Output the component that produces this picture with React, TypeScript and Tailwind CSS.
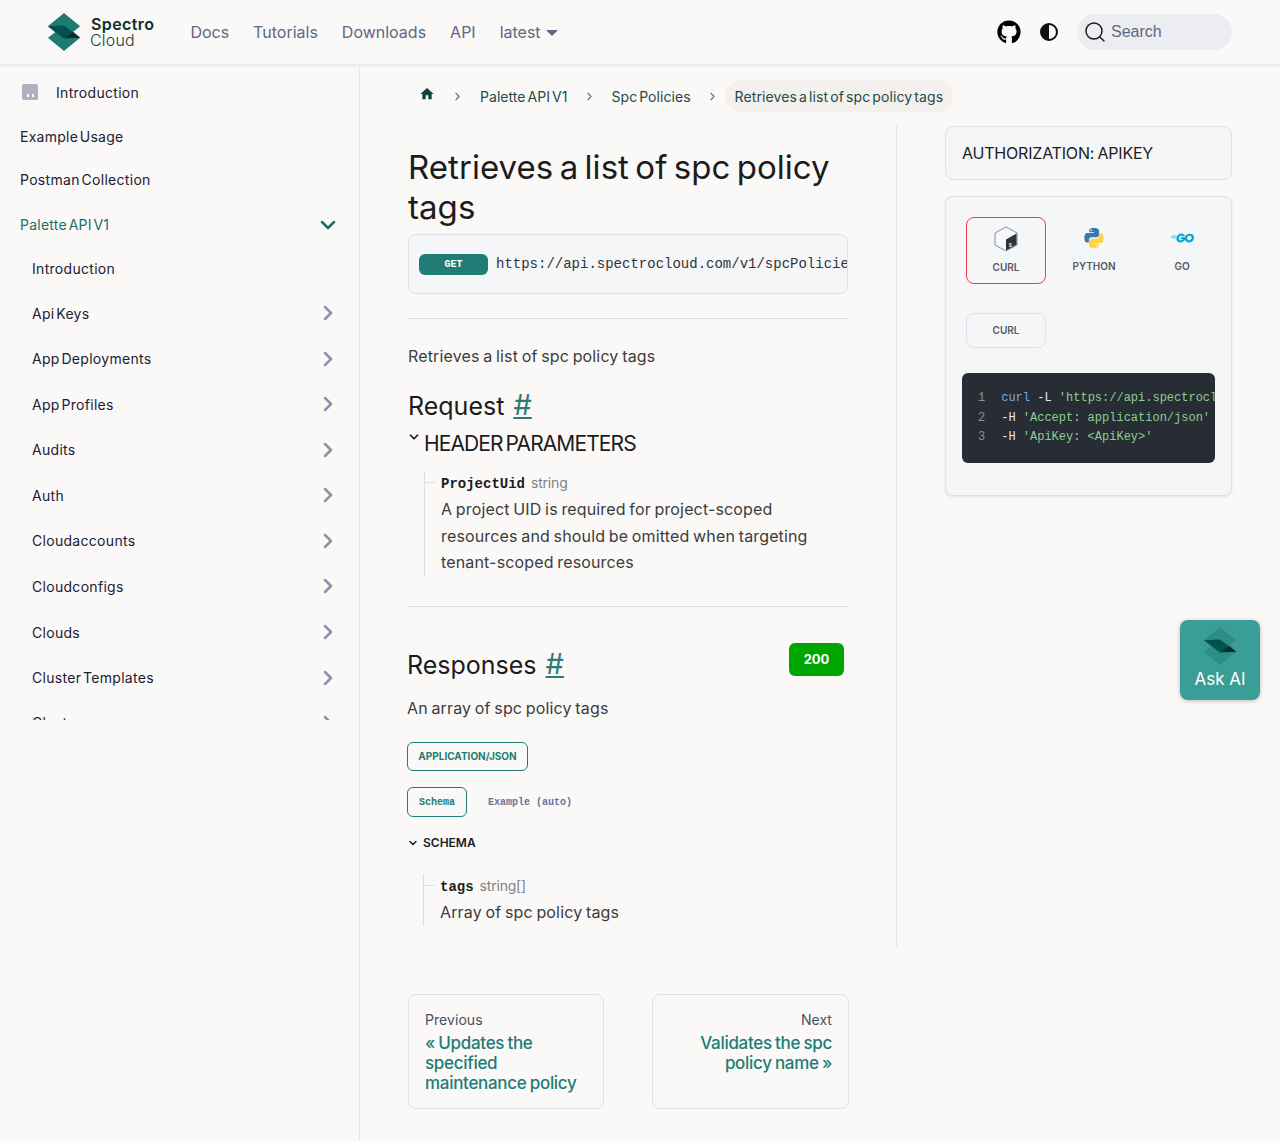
import React from 'react';
import { ChevronDown, ChevronRight, Search } from 'lucide-react';
import { FaGithub } from 'react-icons/fa';
import { MdHome } from 'react-icons/md';
import { SiGo } from 'react-icons/si';

const groups = [
  { label: 'Api Keys', h: 'h-[46px]' },
  { label: 'App Deployments', h: 'h-[45px]' },
  { label: 'App Profiles', h: 'h-[46px]' },
  { label: 'Audits', h: 'h-[45px]' },
  { label: 'Auth', h: 'h-[46px]' },
  { label: 'Cloudaccounts', h: 'h-[45px]' },
  { label: 'Cloudconfigs', h: 'h-[46px]' },
  { label: 'Clouds', h: 'h-[46px]' },
  { label: 'Cluster Templates', h: 'h-[45px]' },
  { label: 'Clusters', h: 'h-[45px]' },
];

const Logo: React.FC<{ className?: string; light?: boolean }> = ({ className, light }) => (
  <svg viewBox="0 0 36 42" className={className}>
    <path d="M18 14 L35 27 L18 41 L1 27 Z" fill={light ? '#2c8d85' : '#1f7a72'} />
    <path d="M18 1 L35 15 L18 29 L1 15 Z" fill={light ? '#2c8d85' : '#1f7a72'} />
    <path d="M1 15 L18 14 L35 27 L18 28 Z" fill="#00524c" />
    <path d="M20 27 L28 21 L35 27 Z" fill="#0b2b2a" />
  </svg>
);

const BashIcon = () => (
  <svg viewBox="0 0 24 26" className="h-[26px] w-[24px]">
    <path d="M12 1 L23 7 V19 L12 25 L1 19 V7 Z" fill="#f7f8fa" stroke="#6b7280" strokeWidth="0.8" />
    <path d="M22.500 7.500 V18.800 L12 24.600 V13.500 Z" fill="#2b333b" />
    <text x="14.500" y="21" fontSize="6" fill="#fff" fontFamily="Liberation Mono, monospace">$</text>
  </svg>
);

const PythonIcon = () => (
  <svg viewBox="0 0 24 24" className="h-[22px] w-[22px]">
    <path d="M11.900 1C6.700 1 7 3.300 7 3.300V5.700h5v.8H5S1.500 6.100 1.500 11.700 4.600 17 4.600 17h1.800v-2.600s-.1-3.100 3-3.100h5.100s2.900 0 2.900-2.800V3.900S17.900 1 11.900 1zM9.100 2.700a.9.900 0 1 1 0 1.800.9.900 0 0 1 0-1.800z" fill="#3a78a9" />
    <path d="M12.100 23c5.200 0 4.900-2.300 4.900-2.300v-2.400h-5v-.8h7s3.500.4 3.500-5.200-3.100-5.300-3.100-5.300h-1.800v2.600s.1 3.100-3 3.100H9.500s-2.900 0-2.900 2.800v4.600S6.100 23 12.100 23zm2.800-1.700a.9.900 0 1 1 0-1.800.9.900 0 0 1 0 1.800z" fill="#ffd343" />
  </svg>
);

const NavItem: React.FC<{ label: string; h: string }> = ({ label, h }) => (
  <div className={`flex items-center justify-between pl-8 pr-[19px] ${h} shrink-0`}>
    <span className="text-[14px] text-[#1c2033] tracking-[0.3px] [word-spacing:-2.500px]">{label}</span>
    <ChevronRight className="h-6 w-6 text-[#8e92a8]" strokeWidth={2.5} />
  </div>
);

const Sidebar: React.FC = () => (
  <aside className="w-[360px] shrink-0 border-r border-[#e5e6ea]">
    <div className="h-[655px] overflow-hidden pt-[5px]">
      <div className="flex h-[44px] items-center pl-[22px]">
        <span className="flex h-4 w-4 items-end justify-center gap-[3px] rounded-[2px] bg-[#afb2c2] pb-[3px]">
          <i className="h-[3px] w-[2px] bg-white" />
          <i className="h-[3px] w-[2px] bg-white" />
        </span>
        <span className="ml-[18px] text-[14px] text-[#1c2033] tracking-[0.3px]">Introduction</span>
      </div>
      <div className="flex h-[44px] items-center pl-5 text-[14px] text-[#1c2033] tracking-[0.25px] [word-spacing:-2.500px]">Example Usage</div>
      <div className="flex h-[43px] items-center pl-5 text-[14px] text-[#1c2033] tracking-[0.3px] [word-spacing:-2.500px]">Postman Collection</div>
      <div className="flex h-[46px] items-center justify-between pl-5 pr-[19px]">
        <span className="text-[14px] text-[#1b6f69] tracking-[0.25px] [word-spacing:-2.500px]">Palette API V1</span>
        <ChevronDown className="mt-px h-6 w-6 text-[#1b6f69]" strokeWidth={2.5} />
      </div>
      <div className="flex h-[43px] items-center pl-8 text-[14px] text-[#1c2033] tracking-[0.3px]">Introduction</div>
      {groups.map((g) => (
        <NavItem key={g.label} label={g.label} h={g.h} />
      ))}
    </div>
  </aside>
);

const Header: React.FC = () => (
  <header className="flex h-[65px] items-center border-b border-[#ebebeb] bg-[#faf9f8] pl-[47px] pr-12 shadow-[0_1px_2px_rgba(0,0,0,0.08)]">
    <Logo className="h-10 w-[34px]" />
    <div className="ml-[10px] flex flex-col leading-[16px]">
      <span className="text-[16px] font-semibold tracking-[0.4px] text-[#0f2d2c]">Spectro</span>
      <span className="-ml-px text-[16px] font-light tracking-[0.2px] text-[#173f3c]">Cloud</span>
    </div>
    <nav className="ml-[36px] flex items-center gap-6 text-[16px] text-[#5f6683]">
      <span>Docs</span>
      <span>Tutorials</span>
      <span>Downloads</span>
      <span>API</span>
      <span className="flex items-center gap-[5px]">latest<span className="mt-[2px] h-0 w-0 border-x-[6px] border-t-[6px] border-x-transparent border-t-[#5f6683]" /></span>
    </nav>
    <div className="ml-auto flex items-center">
      <FaGithub className="h-6 w-6 text-black" />
      <svg viewBox="0 0 18 18" className="ml-[19px] h-[18px] w-[18px]">
        <circle cx="9" cy="9" r="8" fill="#faf9f8" stroke="#111" strokeWidth="2" />
        <path d="M9 1 A8 8 0 0 0 9 17 Z" fill="#111" />
      </svg>
      <div className="ml-[19px] flex h-9 w-[155px] items-center rounded-[18px] bg-[#ecedf1] pl-[6px]">
        <Search className="h-[24px] w-[24px] text-[#1c1c1c]" strokeWidth={1.5} />
        <span className="ml-[4px] font-['Liberation_Sans',sans-serif] text-[16px] text-[#5f6683]">Search</span>
      </div>
    </div>
  </header>
);

const Breadcrumbs: React.FC = () => (
  <div className="flex h-8 items-center pl-[11px] text-[14px] text-[#1d4b48] tracking-[0.05px] [word-spacing:-2px]">
    <MdHome className="-mt-1 h-4 w-4 text-[#0c4540]" />
    <ChevronRight className="ml-[16px] h-[13px] w-[13px] text-[#6b7280]" />
    <span className="ml-[16px]">Palette API V1</span>
    <ChevronRight className="ml-[15px] h-[13px] w-[13px] text-[#6b7280]" />
    <span className="ml-[16px]">Spc Policies</span>
    <ChevronRight className="ml-[15px] h-[13px] w-[13px] text-[#6b7280]" />
    <span className="ml-[6px] flex h-8 items-center rounded-2xl bg-[#f3f0ed] px-[10px] tracking-[0.1px]">Retrieves a list of spc policy tags</span>
  </div>
);

const Field: React.FC<{ name: string; type: string; children: React.ReactNode }> = ({ name, type, children }) => (
  <div className="relative ml-4 border-l border-[#dcdfe6] pl-4">
    <span className="absolute left-0 top-[11px] h-px w-[10px] bg-[#dcdfe6]" />
    <div className="flex items-baseline gap-[6px] leading-[23px]">
      <code className="font-['Liberation_Mono',monospace] text-[14px] font-bold text-[#1c1c1c]">{name}</code>
      <span className="text-[14px] text-[#7f8289] tracking-[-0.2px]">{type}</span>
    </div>
    <div className="pr-4 text-[16px] leading-[26.500px] text-[#3c3c3c] tracking-[0.15px] [word-spacing:-1px]">{children}</div>
  </div>
);

const Article: React.FC = () => (
  <article className="h-[820px] w-[489px] shrink-0 border-r border-[#dfe1e6] pr-12">
    <h1 className="pt-[21px] text-[33px] leading-[40px] tracking-[0.05px] text-[#1c1c1c] [word-spacing:-3px]">Retrieves a list of spc policy tags</h1>
    <div className="mt-[7px] flex h-[60px] items-center overflow-hidden rounded-lg border border-[#dfe1e8] bg-[#f5f6f8] pl-[10px]">
      <span className="flex h-[21px] w-[69px] shrink-0 items-center justify-center rounded-md bg-[#217c76] font-['Liberation_Mono',monospace] text-[10px] font-bold text-white">GET</span>
      <span className="ml-2 whitespace-nowrap font-['Liberation_Mono',monospace] text-[14px] text-[#30333a]">https://api.spectrocloud.com/v1/spcPolicies/tags</span>
    </div>
    <hr className="mt-6 border-[#dcdee3]" />
    <p className="mt-[24px] text-[16px] leading-[27px] text-[#3c3c3c] tracking-[0.15px] [word-spacing:-1px]">Retrieves a list of spc policy tags</p>
    <h2 className="mt-[17px] text-[25px] leading-[38px] text-[#1c1c1c]">Request <span className="ml-[2px] text-[29px] leading-none text-[#2f7a76] underline underline-offset-2">#</span></h2>
    <div className="mt-[3px] flex items-start leading-[32px]">
      <ChevronDown className="-ml-px mr-[3px] mt-[2px] h-[14px] w-[14px] text-[#1c1c1c]" strokeWidth={3} />
      <span className="text-[21px] text-[#1c1c1c] tracking-[-0.9px] [word-spacing:-2px]">HEADER PARAMETERS</span>
    </div>
    <div className="mt-[11px]">
      <Field name="ProjectUid" type="string">A project UID is required for project-scoped resources and should be omitted when targeting tenant-scoped resources</Field>
    </div>
    <hr className="-ml-px mt-[30.500px] border-[#dcdee3]" />
    <div className="-ml-px">
      <div className="mt-9 flex items-start justify-between pr-1">
        <h2 className="mt-[3px] text-[25px] leading-[38px] text-[#1c1c1c]">Responses <span className="ml-[2px] text-[29px] leading-none text-[#2f7a76] underline underline-offset-2">#</span></h2>
        <span className="flex h-[33px] w-[55px] items-center justify-center rounded-md bg-[#00a600] text-[13px] font-bold text-white">200</span>
      </div>
      <p className="mt-[11px] text-[16px] leading-[27px] text-[#3c3c3c] tracking-[0.15px] [word-spacing:-1px]">An array of spc policy tags</p>
      <span className="mt-[20px] flex h-[29px] w-[121px] items-center justify-center rounded-md border border-[#217c76] text-[10px] font-bold text-[#217c76]">APPLICATION/JSON</span>
      <div className="mt-[16px] flex items-center">
        <span className="flex h-[30px] w-[60px] items-center justify-center rounded-md border border-[#217c76] font-['Liberation_Mono',monospace] text-[10px] font-bold text-[#217c76]">Schema</span>
        <span className="ml-[21px] font-['Liberation_Mono',monospace] text-[10px] font-bold text-[#6b7299]">Example (auto)</span>
      </div>
      <div className="mt-[17px] flex items-center">
        <ChevronDown className="h-3 w-3 text-[#1c1c1c]" strokeWidth={3} />
        <span className="ml-1 text-[12px] font-semibold text-[#1c1c1c]">SCHEMA</span>
      </div>
      <div className="mt-[22px]">
        <Field name="tags" type="string[]">Array of spc policy tags</Field>
      </div>
    </div>
  </article>
);

const Tab: React.FC<{ label: string; active?: boolean; icon: React.ReactNode }> = ({ label, active, icon }) => (
  <div className={`flex h-[67px] w-20 shrink-0 flex-col items-center rounded-lg pt-[8px] ${active ? 'border border-[#ef3b45]' : ''}`}>
    <span className="flex h-[26px] items-center">{icon}</span>
    <span className="mt-[8px] text-[10px] font-semibold text-[#555a66]">{label}</span>
  </div>
);

const Panel: React.FC = () => (
  <div className="ml-12 w-[287px] shrink-0">
    <div className="flex h-[54px] items-center rounded-lg border border-[#dfe1e8] bg-[#f5f6f8] pl-4 text-[16px] text-[#1c1c1c] tracking-[-0.2px] [word-spacing:-1px]">AUTHORIZATION: APIKEY</div>
    <div className="mt-4 h-[300px] rounded-lg border border-[#dfe1e8] bg-[#f5f6f8] pl-4 pr-4 pt-5 shadow-[0_1px_3px_rgba(0,0,0,0.1)]">
      <div className="ml-1 flex gap-2">
        <Tab label="CURL" active icon={<BashIcon />} />
        <Tab label="PYTHON" icon={<PythonIcon />} />
        <Tab label="GO" icon={<SiGo className="h-6 w-6 text-[#00acd7]" />} />
      </div>
      <div className="ml-1 mt-[29px] flex h-[35px] w-20 items-center justify-center rounded-lg border border-[#dfe1e8] text-[10px] font-semibold text-[#555a66]">CURL</div>
      <div className="mt-[25px] h-[90px] overflow-hidden whitespace-nowrap rounded-md bg-[#282c34] pl-4 pt-4 font-['Liberation_Mono',monospace] text-[12px] leading-[19.500px]">
        <div><span className="text-[#8c8f96]">1</span><span className="ml-4 text-[#7fa6e8]">curl</span><span className="text-[#e6e6e6]"> -L </span><span className="text-[#8bcf8f]">'https://api.spectrocloud.com/v1/spcPolicies/tags'</span></div>
        <div><span className="text-[#8c8f96]">2</span><span className="ml-4 text-[#e6e6e6]">-H </span><span className="text-[#8bcf8f]">'Accept: application/json'</span></div>
        <div><span className="text-[#8c8f96]">3</span><span className="ml-4 text-[#e6e6e6]">-H </span><span className="text-[#8bcf8f]">'ApiKey: &lt;ApiKey&gt;'</span></div>
      </div>
    </div>
  </div>
);

const Pager: React.FC<{ dir: string; title: string; right?: boolean; w: string }> = ({ dir, title, right, w }) => (
  <div className={`h-[115px] ${w} rounded-lg border border-[#dfe1e8] px-4 pt-[15px] ${right ? 'text-right' : ''}`}>
    <div className="text-[14px] leading-[20px] text-[#4b5060] tracking-[0.05px]">{dir}</div>
    <div className="mt-[3px] text-[17px] font-medium leading-[20px] text-[#217c76] tracking-[-0.3px] [word-spacing:-1px]">{title}</div>
  </div>
);

const App: React.FC = () => (
  <div className="relative min-h-[1141px] bg-[#faf9f8] font-['Inter','Noto_Sans',sans-serif]">
    <Header />
    <div className="flex h-[1076px]">
      <Sidebar />
      <main className="pl-12 pt-[15px]">
        <Breadcrumbs />
        <div className="mt-[14px] flex items-start">
          <Article />
          <Panel />
        </div>
        <div className="mt-12 flex w-[441px] justify-between">
          <Pager dir="Previous" title="« Updates the specified maintenance policy" w="w-[196px]" />
          <Pager dir="Next" title="Validates the spc policy name »" right w="w-[197px]" />
        </div>
      </main>
    </div>
    <div className="absolute left-[1180px] top-[620px] flex h-20 w-20 flex-col items-center rounded-lg bg-[#3a9d96] pt-[6px] shadow-[0_1px_4px_rgba(0,0,0,0.25)]">
      <Logo className="h-10 w-[34px]" light />
      <span className="mt-px text-[17px] leading-[24px] text-white">Ask AI</span>
    </div>
  </div>
);

export default App;
